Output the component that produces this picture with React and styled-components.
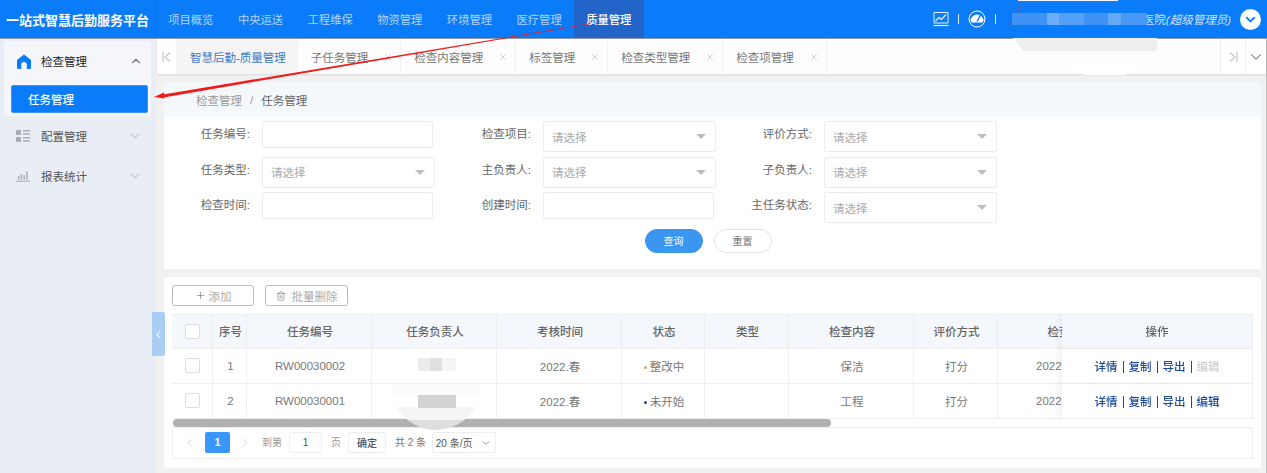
import React from "react";
import styled, { createGlobalStyle } from "styled-components";
import { ChevronDown, ChevronUp, ChevronLeft, ChevronRight, X, Plus, Trash2 } from "lucide-react";

const Global = createGlobalStyle`
  html, body { margin: 0; padding: 0; background: #f1f1f1; }
  * { box-sizing: border-box; }
  body { font-family: "Liberation Sans", "Noto Sans CJK SC", sans-serif; font-size: 11.5px; }
`;

const Page = styled.div`
  position: relative; width: 1267px; height: 473px; overflow: hidden;
  display: flex; flex-direction: column; background: #f1f1f1;
`;
const Header = styled.header`
  height: 39px; flex: none; display: flex; align-items: stretch;
  background: #0a7cf9; border-bottom: 1px solid #8f98a3; color: #fff;
`;
const Brand = styled.div`
  width: 156px; flex: none; display: flex; align-items: center; justify-content: center;
  font-size: 13px; font-weight: 700; border-right: 1px solid #0b6fe0; white-space: nowrap;
`;
const Nav = styled.nav`display: flex; flex: 1;`;
const NavItem = styled.div`
  width: 69.67px; display: flex; align-items: center; justify-content: center;
  color: ${p => (p.$active ? "#fff" : "rgba(255,255,255,.68)")};
  background: ${p => (p.$active ? "#2264c8" : "transparent")};
  font-weight: ${p => (p.$active ? 500 : 400)};
  font-size: 11.3px;
`;
const UserBar = styled.div`
  display: flex; align-items: center; padding-right: 6px; color: rgba(255,255,255,.8); font-size: 11.5px;
`;
const Bar = styled.span`width: 1px; height: 10px; background: rgba(255,255,255,.85); margin: 0 9px;`;
const UserName = styled.span`white-space: nowrap; width: 226px; text-align: right; em { font-style: italic; }`;
const Avatar = styled.span`
  width: 21px; height: 21px; border-radius: 50%; background: #fff; color: #0a7cf9;
  margin-left: 9px; display: flex; align-items: center; justify-content: center;
`;

const Body = styled.div`flex: 1; display: flex; min-height: 0;`;
const Sidebar = styled.aside`width: 156px; flex: none; background: #e9edf5; padding: 2px 5px 0 4px;`;
const OpenGroup = styled.div`height: 75px; background: #f4f6fa; border-radius: 3px; padding: 0 3px 0 7px;`;
const GroupHead = styled.div`
  height: ${p => (p.$open ? "44px" : "40px")}; display: flex; align-items: center; gap: 10px;
  color: ${p => (p.$open ? "#222" : "#555")};
  padding-left: ${p => (p.$open ? "5px" : "12px")};
  padding-bottom: ${p => (p.$open ? "4px" : "0")};
  padding-right: ${p => (p.$open ? "5px" : "9px")};
  span { flex: 1; margin-left: ${p => (p.$open ? "-1px" : "1px")}; }
`;
const SubItem = styled.div`
  height: 28px; background: #0a7cf9; color: #fff; border-radius: 2px; font-weight: 500;
  display: flex; align-items: center; padding-left: 16px; border: 1px solid #3d95f5;
`;

const Main = styled.main`flex: 1; min-width: 0; display: flex; flex-direction: column; border-right: 1px solid #bcbcbc;`;
const TabBar = styled.div`
  height: 35px; flex: none; display: flex; background: #fdfdfd;
  box-shadow: 0 1px 2px rgba(0,0,0,.1); margin-left: 1px;
`;
const TabEdge = styled.div`
  width: ${p => p.$w}px; flex: none; display: flex; align-items: center; justify-content: center;
  color: ${p => p.$c || "#c4c4c4"}; background: #fff;
  border-left: ${p => (p.$line ? "1px solid #f0f0f0" : "none")};
`;
const TabList = styled.div`flex: 1; display: flex;`;
const Tab = styled.div`
  display: flex; align-items: center; padding: ${p => (p.$active ? "0 11px 0 14px" : "0 7px 0 13px")};
  gap: 15px; white-space: nowrap; border-right: 1px solid #f1f1f1;
  background: ${p => (p.$active ? "#f5f5f5" : "transparent")};
  color: ${p => (p.$active ? "#3f78c9" : "#777")};
  svg { color: #c8c8c8; }
`;
const Content = styled.div`flex: 1; padding: 8px 5px 0 8px; display: flex; flex-direction: column; gap: 8px; min-height: 0;`;
const FilterCard = styled.section`height: 187px; flex: none; background: #fff; display: flex; flex-direction: column;`;
const Crumbs = styled.div`
  height: 35px; flex: none; background: #f5f8fb; display: flex; align-items: center; padding-left: 32px; color: #999;
  i { font-style: normal; margin: 0 8px; } b { font-weight: 400; color: #666; }
`;
const FormGrid = styled.div`
  padding-top: 4px; display: grid; grid-template-columns: repeat(3, 281px); grid-auto-rows: 35.5px;
`;
const Field = styled.div`display: flex; align-items: flex-start;`;
const Label = styled.label`width: 86px; flex: none; margin-right: 12px; text-align: right; line-height: 27px; color: #666;`;
const TextBox = styled.div`width: 171px; height: 27px; border: 1px solid #ececec; border-radius: 2px; background: #fff;`;
const Select = styled.div`
  width: 173px; height: 31px; border: 1px solid #ececec; border-radius: 2px; background: #fff;
  display: flex; align-items: center; justify-content: space-between; padding: 0 9px 0 8px; color: #aaa;
`;
const Caret = styled.span`width: 0; height: 0; border: 5px solid transparent; border-top-color: #bdbdbd; border-bottom: 0;`;
const Actions = styled.div`display: flex; justify-content: center; gap: 11px; padding: 1px 9px 0 0;`;
const Pill = styled.button`
  width: 58px; height: 24px; border-radius: 12px; font: inherit; font-size: 10px;
  border: 1px solid ${p => (p.$primary ? "#3a96ee" : "#e2e2e2")};
  background: ${p => (p.$primary ? "#3a96ee" : "#fff")};
  color: ${p => (p.$primary ? "#fff" : "#777")};
`;

const TableCard = styled.section`
  height: 191px; flex: none; background: #fff; padding: 8px 8px 9px 8px; border-radius: 2px;
  display: flex; flex-direction: column; box-shadow: 0 0 1px rgba(0,0,0,.05);
`;
const Toolbar = styled.div`display: flex; gap: 11px; height: 21px; margin-bottom: 8px;`;
const GhostBtn = styled.button`
  width: ${p => p.$w}px; height: 21px; border: 1px solid #bdbdbd; border-radius: 3px; background: #fff;
  font: inherit; color: #aaa; display: flex; align-items: center; justify-content: center; gap: ${p => p.$gap}px; padding: 0;
  svg { color: #999; }
`;
const TableWrap = styled.div`width: 1081px; height: 105px; overflow: hidden; flex: none;`;
const Table = styled.table`
  width: 1770px; table-layout: fixed; border-collapse: separate; border-spacing: 0; font-size: 11.5px; color: #777;
  th, td { text-align: center; padding: 0 0 1px 2px; border-right: 1px solid #eee; border-bottom: 1px solid #eee; white-space: nowrap; overflow: hidden; }
  th:first-child, td:first-child, th:last-child, td:last-child { padding-left: 0; }
  th { height: 35px; background: #f4f7fb; color: #666; font-weight: 500; border-top: 1px solid #eee; }
  td { height: 35px; }
`;
const Fixed = styled.td`
  position: sticky; right: 0; background: #fff; box-shadow: -4px 0 6px rgba(0,0,0,.05);
`;
const FixedHead = styled.th`
  position: sticky; right: 0; box-shadow: -4px 0 6px rgba(0,0,0,.05);
`;
const DateText = styled.span`display: block; text-align: left; padding-left: 36px;`;
const Check = styled.span`display: inline-block; width: 15px; height: 15px; border: 1px solid #ddd; border-radius: 2px; background: #fff; vertical-align: middle;`;
const Dot = styled.span`
  display: inline-block; width: 3px; height: 3px; border-radius: 50%; margin-right: 3px; vertical-align: middle;
  background: ${p => p.$c};
`;
const Link = styled.span`
  font-weight: 500; color: ${p => (p.$off ? "#cfcfcf" : "#1d4b9b")}; padding: 0 5px 0 0; margin-right: 5px;
  border-right: 1px solid #1d4b9b;
  &:last-child { margin-right: 0; padding-right: 0; border-right: 0; }
`;
const ScrollTrack = styled.div`height: 8px; flex: none; padding-left: 1px;`;
const ScrollThumb = styled.div`height: 8px; width: 658px; border-radius: 4px; background: #b0b0b0;`;
const Pager = styled.div`
  flex: 1; border: 1px solid #eee; display: flex; align-items: flex-start;
  padding: 4px 0 0 10px; font-size: 10px; color: #999;
`;
const PageArrow = styled.span`width: ${p => p.$w}px; height: 21px; color: #c4c4c4; display: flex; align-items: center; justify-content: center; flex: none;`;
const PageNum = styled.span`
  width: 25px; height: 21px; background: #3a96f8; color: #fff; border-radius: 2px; flex: none; margin-left: 9px;
  display: flex; align-items: center; justify-content: center; font-weight: 700;
`;
const PageText = styled.span`line-height: 21px; margin: ${p => p.$m}; white-space: nowrap; color: ${p => p.$c || "#999"};`;
const PageBox = styled.span`
  width: ${p => p.$w}px; height: 21px; border: 1px solid #eee; border-radius: 2px; flex: none;
  display: flex; align-items: center; justify-content: center; gap: 8px; color: #555; margin: ${p => p.$m};
  font-weight: ${p => (p.$bold ? 500 : 400)};
`;
const Handle = styled.div`
  position: absolute; left: 152px; top: 312px; width: 13px; height: 44px; background: #a9cdf5; border-radius: 0 2px 2px 0;
  color: #e8f2fd; display: flex; align-items: center; justify-content: center;
`;
const Overlay = styled.svg`position: absolute; left: 0; top: 0; pointer-events: none;`;

const tabs = ["子任务管理", "检查内容管理", "标签管理", "检查类型管理", "检查项管理"];
const nav = ["项目概览", "中央运送", "工程维保", "物资管理", "环境管理", "医疗管理", "质量管理"];
const widths = [41, 34, 125, 125, 125, 83, 84, 125, 84, 144, 609, 191];
const rows = [
  { n: 1, id: "RW00030002", dot: "#e9a15f", st: "整改中", c: "保洁", off: true },
  { n: 2, id: "RW00030001", dot: "#1d4b9b", st: "未开始", c: "工程", off: false },
];
const fields = [
  ["任务编号", "i"], ["检查项目", "s"], ["评价方式", "s"],
  ["任务类型", "s"], ["主负责人", "s"], ["子负责人", "s"],
  ["检查时间", "i"], ["创建时间", "i"], ["主任务状态", "s"],
];

const HomeIcon = () => (
  <svg width="16" height="15" viewBox="0 0 16 15"><path d="M8 .5 15 6v8a1 1 0 0 1-1 1h-3.2v-4.2a2.8 2.8 0 0 0-5.6 0V15H2a1 1 0 0 1-1-1V6z" fill="#0a7cf9" /></svg>
);
const GridIcon = () => (
  <svg width="14" height="12" viewBox="0 0 14 12" fill="#a9adb6"><rect x="0" y="0" width="5" height="5" rx="1" /><rect x="0" y="7" width="5" height="5" rx="1" /><rect x="7" y="0" width="7" height="1.5" /><rect x="7" y="3.2" width="7" height="1.5" /><rect x="7" y="7" width="7" height="1.5" /><rect x="7" y="10.2" width="7" height="1.5" /></svg>
);
const ChartIcon = () => (
  <svg width="14" height="13" viewBox="0 0 15 13" fill="#a9adb6"><rect x="2" y="6" width="1.6" height="4" /><rect x="5" y="4" width="1.6" height="6" /><rect x="8" y="5" width="1.6" height="5" /><rect x="11" y="1" width="1.6" height="9" /><rect x="0" y="11" width="15" height="1.2" /></svg>
);
const TrendIcon = () => (
  <svg width="16" height="16" viewBox="0 0 16 16" fill="none" stroke="#e6f1fe" strokeWidth="1"><path d="M1 12V1.5h14V12z" /><path d="M2.5 10 6 6.5l2.5 2L13 3.5" strokeWidth="1.2" /><path d="M0.5 14.5h15" strokeWidth="1.2" /></svg>
);
const GaugeIcon = () => (
  <svg width="18" height="18" viewBox="0 0 18 18" fill="none"><circle cx="9" cy="9" r="8" stroke="#fff" strokeWidth="1" /><path d="M2.5 11a6.5 6.5 0 1 1 13 0l-1.5 1.6H4z" fill="#fff" /><path d="M9 11.5 12.5 5" stroke="#0a7cf9" strokeWidth="1.4" /></svg>
);
const EdgeLeft = () => (
  <svg width="9" height="10" viewBox="0 0 9 10" fill="none" stroke="currentColor" strokeWidth="1.2"><path d="M1 0v10M8 .5 3 5l5 4.5" /></svg>
);
const EdgeRight = () => (
  <svg width="9" height="10" viewBox="0 0 9 10" fill="none" stroke="currentColor" strokeWidth="1.2"><path d="M8 0v10M1 .5 6 5 1 9.5" /></svg>
);

export default function App() {
  return (
    <Page>
      <Global />
      <Header>
        <Brand>一站式智慧后勤服务平台</Brand>
        <Nav>{nav.map((n, i) => <NavItem key={n} $active={i === 6}>{n}</NavItem>)}</Nav>
        <UserBar>
          <TrendIcon /><Bar /><GaugeIcon /><Bar />
          <UserName>医院<em>(超级管理员)</em></UserName>
          <Avatar><ChevronDown size={15} strokeWidth={3} /></Avatar>
        </UserBar>
      </Header>
      <Body>
        <Sidebar>
          <OpenGroup>
            <GroupHead $open><HomeIcon /><span>检查管理</span><ChevronUp size={14} color="#777" /></GroupHead>
            <SubItem>任务管理</SubItem>
          </OpenGroup>
          <GroupHead><GridIcon /><span>配置管理</span><ChevronDown size={14} color="#c6cad2" /></GroupHead>
          <GroupHead><ChartIcon /><span>报表统计</span><ChevronDown size={14} color="#c6cad2" /></GroupHead>
        </Sidebar>
        <Main>
          <TabBar>
            <TabEdge $w={19}><EdgeLeft /></TabEdge>
            <TabList>
              <Tab $active>智慧后勤-质量管理</Tab>
              {tabs.map(t => <Tab key={t}>{t}<X size={10} /></Tab>)}
            </TabList>
            <TabEdge $w={25} $line><EdgeRight /></TabEdge>
            <TabEdge $w={21} $line $c="#333"><ChevronDown size={18} strokeWidth={1.2} /></TabEdge>
          </TabBar>
          <Content>
            <FilterCard>
              <Crumbs>检查管理<i>/</i><b>任务管理</b></Crumbs>
              <FormGrid>
                {fields.map(([l, k]) => (
                  <Field key={l}>
                    <Label>{l}:</Label>
                    {k === "i" ? <TextBox /> : <Select>请选择<Caret /></Select>}
                  </Field>
                ))}
              </FormGrid>
              <Actions><Pill $primary>查询</Pill><Pill>重置</Pill></Actions>
            </FilterCard>
            <TableCard>
              <Toolbar>
                <GhostBtn $w={82} $gap={3}><Plus size={11} />添加</GhostBtn>
                <GhostBtn $w={83} $gap={6}><Trash2 size={10} />批量删除</GhostBtn>
              </Toolbar>
              <TableWrap>
                <Table>
                  <colgroup>{widths.map((w, i) => <col key={i} width={w} />)}</colgroup>
                  <thead>
                    <tr>
                      <th><Check /></th><th>序号</th><th>任务编号</th><th>任务负责人</th><th>考核时间</th>
                      <th>状态</th><th>类型</th><th>检查内容</th><th>评价方式</th><th>检查时间</th><th></th>
                      <FixedHead>操作</FixedHead>
                    </tr>
                  </thead>
                  <tbody>
                    {rows.map(r => (
                      <tr key={r.n}>
                        <td><Check /></td><td>{r.n}</td><td>{r.id}</td><td></td><td>2022.春</td>
                        <td><Dot $c={r.dot} />{r.st}</td><td></td><td>{r.c}</td><td>打分</td>
                        <td><DateText>2022</DateText></td><td></td>
                        <Fixed>
                          <Link>详情</Link><Link>复制</Link><Link>导出</Link><Link $off={r.off}>编辑</Link>
                        </Fixed>
                      </tr>
                    ))}
                  </tbody>
                </Table>
              </TableWrap>
              <ScrollTrack><ScrollThumb /></ScrollTrack>
              <Pager>
                <PageArrow $w={13}><ChevronLeft size={14} strokeWidth={1.2} /></PageArrow>
                <PageNum>1</PageNum>
                <PageArrow $w={30}><ChevronRight size={14} strokeWidth={1.2} /></PageArrow>
                <PageText $m="0 7px 0 2px">到第</PageText>
                <PageBox $w={33} $m="0 9px 0 0">1</PageBox>
                <PageText $m="0 7px 0 0">页</PageText>
                <PageBox $w={38} $m="0 9px 0 0" $bold>确定</PageBox>
                <PageText $m="0 6px 0 0" $c="#777">共 2 条</PageText>
                <PageBox $w={64}>20 条/页<ChevronDown size={12} strokeWidth={1.2} /></PageBox>
              </Pager>
            </TableCard>
          </Content>
        </Main>
      </Body>
      <Handle><ChevronLeft size={13} /></Handle>
      <Overlay width="1267" height="473" viewBox="0 0 1267 473">
        <defs>
          <clipPath id="blobA"><ellipse cx="436" cy="385" rx="45" ry="45" /></clipPath>
        </defs>
        <path d="M1018 0h100v1h-100z" fill="#f4f8fe" />
        <path d="M1008 25 1021 3v22z" fill="#2d6fd2" />
        <path d="M1012 38h145l1 11-3 2h-132l-8-12z" fill="#eeeeee" />
        <path d="M1050 62l95-2-20 15h-40z" fill="#ffffff" />
        <rect x="1012" y="13" width="135" height="12" fill="#3f93f6" />
        <rect x="1047" y="13" width="12" height="12" fill="#6cadf9" />
        <rect x="1059" y="13" width="25" height="12" fill="#55a0f7" />
        <rect x="1108" y="13" width="13" height="12" fill="#64a8f8" />
        <rect x="1121" y="13" width="26" height="12" fill="#4a98f6" />
        <g clipPath="url(#blobA)">
          <rect x="391" y="384" width="90" height="12" fill="#fbfbfb" />
          <rect x="391" y="396" width="90" height="11" fill="#ffffff" />
          <rect x="391" y="407" width="90" height="13" fill="#f5f5f5" />
          <rect x="391" y="420" width="90" height="10" fill="#dedede" />
        </g>
        <rect x="418" y="358" width="12" height="13" fill="#ececec" />
        <rect x="430" y="358" width="12" height="13" fill="#e0e0e0" />
        <rect x="442" y="358" width="14" height="13" fill="#f5f5f5" />
        <rect x="418" y="395" width="38" height="13" fill="#d2d2d2" />
        <path d="M590 23.4 163 94.6 163.5 97.4 590 24z" fill="#f01c1c" />
        <path d="M154 97 164 92.5 164.5 98.5z" fill="#f01c1c" />
      </Overlay>
    </Page>
  );
}
